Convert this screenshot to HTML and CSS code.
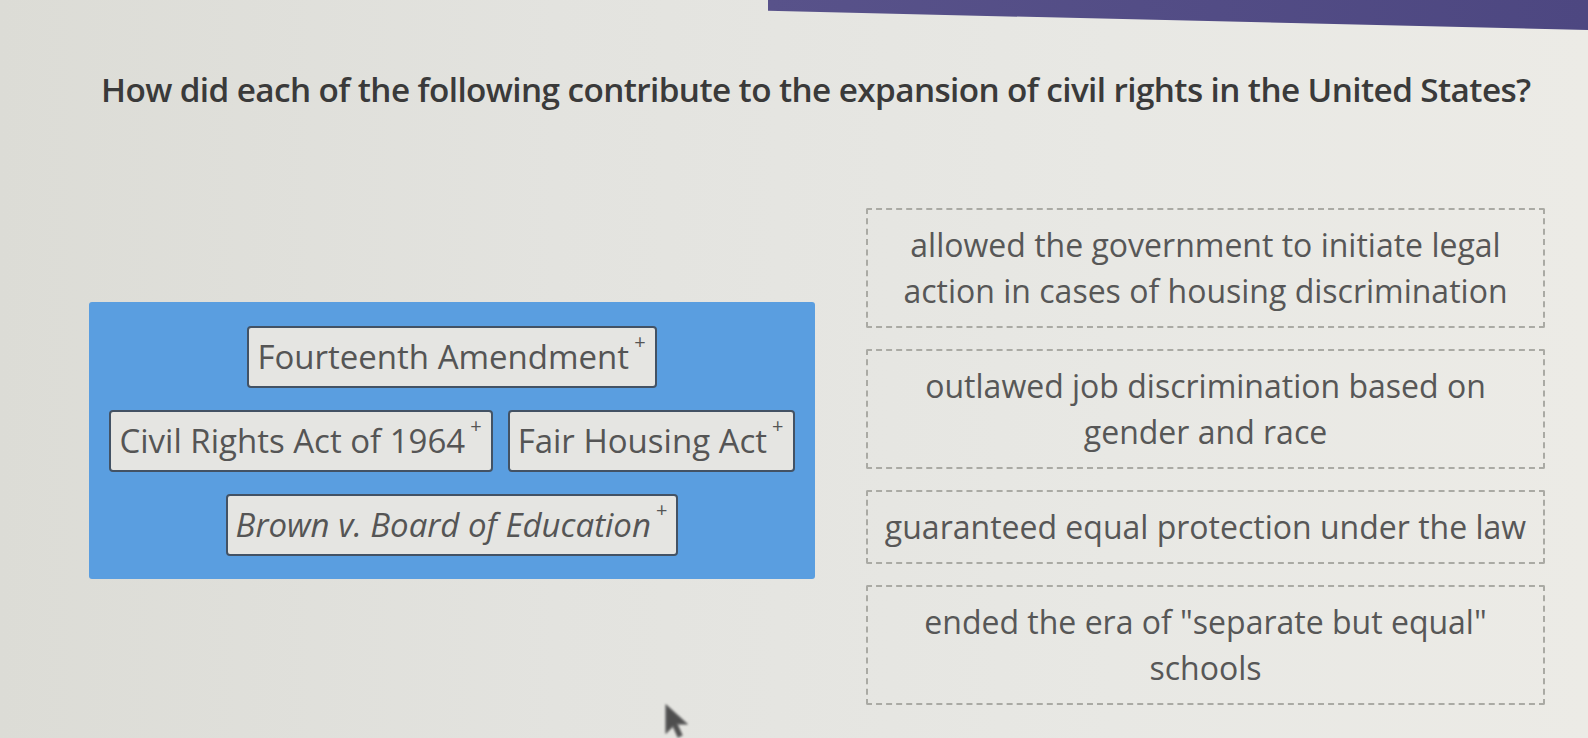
FILE: index.html
```html
<!DOCTYPE html>
<html lang="en">

<head>
    <meta charset="UTF-8">
    <meta name="viewport" content="width=device-width, initial-scale=1.0">
    <title>Civil Rights Matching</title>
    <link rel="stylesheet" href="styles.css">
</head>

<body>
    <div class="topbar"></div>
    <div class="page">
        <h1 class="question">How did each of the following contribute to the expansion of civil rights in the United States?</h1>
        <div class="board">
            <div class="bank">
                <div class="chip">Fourteenth Amendment<span class="plus">+</span></div>
                <div class="chip">Civil Rights Act of 1964<span class="plus">+</span></div>
                <div class="chip">Fair Housing Act<span class="plus">+</span></div>
                <div class="chip chip-italic">Brown v. Board of Education<span class="plus">+</span></div>
            </div>
            <div class="targets">
                <div class="target">allowed the government to initiate legal action in cases of housing discrimination</div>
                <div class="target">outlawed job discrimination based on gender and race</div>
                <div class="target">guaranteed equal protection under the law</div>
                <div class="target">ended the era of "separate but equal" schools</div>
            </div>
        </div>
    </div>
    <svg class="cursor" width="26" height="36" viewBox="0 0 26 36">
        <path d="M2 2 L2 30 L9 23 L14 34 L18 32 L13 21 L23 21 Z" fill="#4e4e4e" stroke="#6a6a6a" stroke-width="1.5" stroke-linejoin="round" />
    </svg>
</body>

</html>
```

FILE: styles.css
```css
body {
    margin: 0;
    height: 738px;
    overflow: hidden;
    background: linear-gradient(90deg, #dcdcd6 0%, #e3e3df 35%, #e8e8e4 70%, #ecebe6 100%);
    font-family: "Open Sans", "Liberation Sans", sans-serif;
    color: #555;
    position: relative;
}

.topbar {
    position: absolute;
    top: 0;
    right: 0;
    width: 820px;
    height: 30px;
    background: linear-gradient(90deg, #58528a, #4d4781);
    clip-path: polygon(0 0, 100% 0, 100% 100%, 0 36%);
}

.page {
    padding-top: 67px;
}

.question {
    margin: 0;
    padding-left: 101px;
    font-size: 33.3px;
    font-weight: 600;
    letter-spacing: -0.6px;
    color: #3a3a3a;
    line-height: 44px;
    white-space: nowrap;
}

.board {
    display: flex;
    align-items: flex-start;
    gap: 51px;
    margin-top: 97px;
    padding-left: 89px;
}

.bank {
    width: 726px;
    box-sizing: border-box;
    margin-top: 94px;
    padding: 24px 10px 23px;
    background: #5a9ee0;
    border-radius: 3px;
    display: flex;
    flex-wrap: wrap;
    justify-content: center;
    gap: 22px 15px;
}

.chip {
    background: #e5e5e2;
    border: 2px solid #435264;
    border-radius: 4px;
    padding: 7px 9px 7px 8px;
    font-size: 33px;
    line-height: 44px;
    color: #555;
    white-space: nowrap;
}

.chip-italic {
    font-style: italic;
}

/* small drag marker after each label */
.plus {
    font-size: 20px;
    font-style: normal;
    line-height: 0;
    vertical-align: 20px;
    margin-left: 5px;
    color: #555;
}

.targets {
    width: 679px;
    display: flex;
    flex-direction: column;
    gap: 21px;
}

.target {
    border: 2px dashed #aaaaa4;
    border-radius: 2px;
    text-align: center;
    font-size: 32px;
    line-height: 46px;
    padding: 12px 10px;
    color: #575757;
}

.cursor {
    position: absolute;
    left: 664px;
    top: 703px;
    filter: blur(1px);
}
```
